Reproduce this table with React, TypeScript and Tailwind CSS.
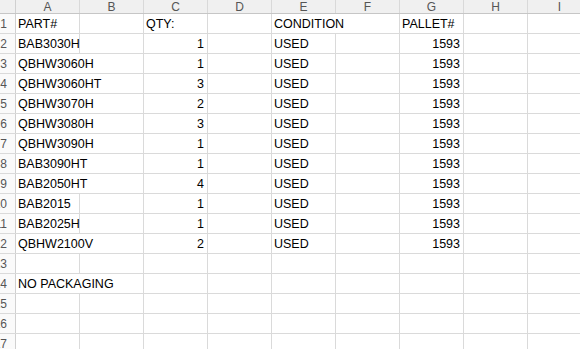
import React from "react";

type Cell = { text?: string; align?: "left" | "right"; spill?: boolean };

const COLS = ["A", "B", "C", "D", "E", "F", "G", "H", "I"];

const items: [string, string][] = [
  ["BAB3030H", "1"],
  ["QBHW3060H", "1"],
  ["QBHW3060HT", "3"],
  ["QBHW3070H", "2"],
  ["QBHW3080H", "3"],
  ["QBHW3090H", "1"],
  ["BAB3090HT", "1"],
  ["BAB2050HT", "4"],
  ["BAB2015", "1"],
  ["BAB2025H", "1"],
  ["QBHW2100V", "2"],
];

function buildRows(): Cell[][] {
  const rows: Cell[][] = [];
  const empty = (): Cell[] => COLS.map(() => ({}));
  const header = empty();
  header[0] = { text: "PART#" };
  header[2] = { text: "QTY:" };
  header[4] = { text: "CONDITION", spill: true };
  header[6] = { text: "PALLET#" };
  rows.push(header);
  for (const [part, qty] of items) {
    const r = empty();
    r[0] = { text: part, spill: part.length >= 9 };
    r[2] = { text: qty, align: "right" };
    r[4] = { text: "USED" };
    r[6] = { text: "1593", align: "right" };
    rows.push(r);
  }
  rows.push(empty());
  const np = empty();
  np[0] = { text: "NO PACKAGING", spill: true };
  rows.push(np);
  rows.push(empty());
  rows.push(empty());
  rows.push(empty());
  return rows;
}

export default function App() {
  const rows = buildRows();
  return (
    <div
      className="w-[580px] h-[349px] overflow-hidden bg-white text-black"
      style={{ fontFamily: '"Liberation Sans", Arial, sans-serif' }}
    >
      {/* column header */}
      <div className="flex h-[14px] bg-[#f0f0f0] border-b border-[#c6c6c6]">
        <div className="w-4 shrink-0 border-r border-[#d0d0d0]" />
        {COLS.map((c) => (
          <div
            key={c}
            className="w-16 shrink-0 border-r border-[#d9d9d9] text-center text-[12px] leading-[15px] text-[#555]"
          >
            {c}
          </div>
        ))}
      </div>
      {rows.map((row, i) => (
        <div key={i} className="flex h-5 border-b border-[#dadada]">
          <div className="w-4 shrink-0 overflow-hidden border-r border-[#d0d0d0] bg-[#fafafa] flex justify-end pr-[8px] text-[12px] leading-[21px] text-[#555] whitespace-nowrap">
            <span className="shrink-0">{i + 1}</span>
          </div>
          {row.map((cell, j) => (
            <div
              key={j}
              className={
                "w-16 shrink-0 h-full whitespace-nowrap text-[12.5px] leading-[21px] " +
                (cell.spill ? "border-r border-transparent " : "border-r border-[#dadada] ") +
                (cell.align === "right" ? "text-right pr-[3px]" : "text-left pl-[2px]")
              }
            >
              {cell.text}
            </div>
          ))}
        </div>
      ))}
    </div>
  );
}
